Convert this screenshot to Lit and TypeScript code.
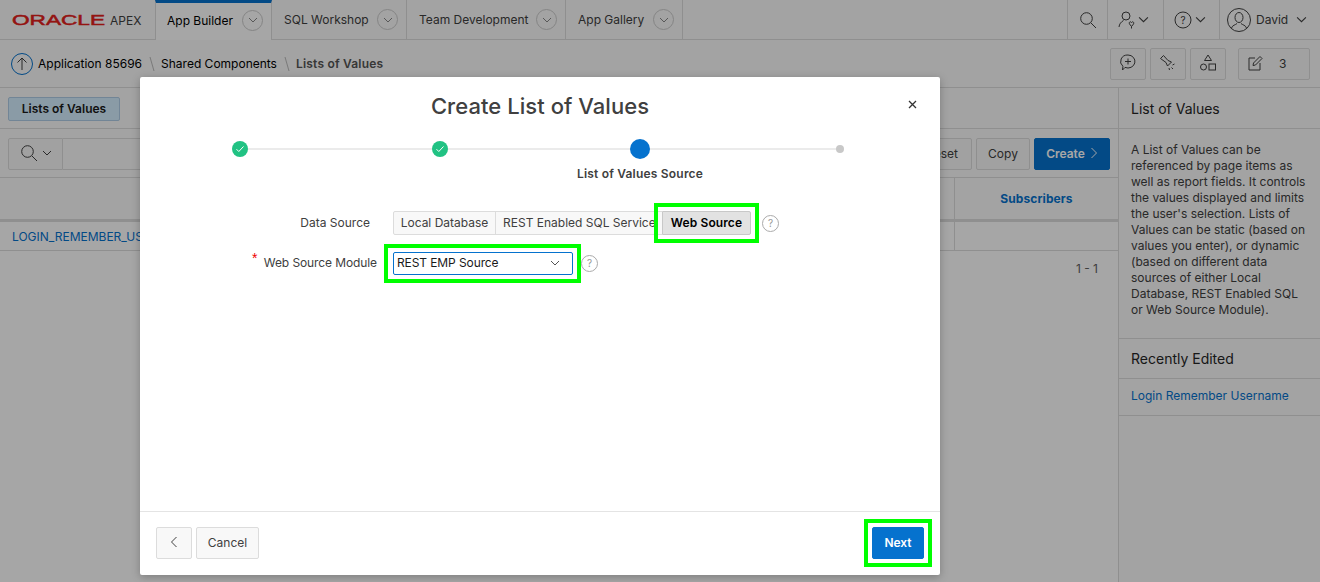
import { LitElement, html, css } from "lit";
import { customElement } from "lit/decorators.js";

const chev = (s = 10) => html`<svg width=${s} height=${s} viewBox="0 0 10 10" fill="none" stroke="currentColor" stroke-width="1"><path d="M1 3l4 4 4-4"/></svg>`;
const help = (cls = "help") => html`<svg class=${cls} width="17" height="17" viewBox="0 0 17 17"><circle cx="8.500" cy="8.500" r="8" fill="none" stroke="#aaa"/><text x="8.500" y="12" text-anchor="middle" font-size="10" fill="#999">?</text></svg>`;
const check = html`<svg width="10" height="10" viewBox="0 0 10 10" fill="none" stroke="#fff" stroke-width="1"><path d="M1.500 5.200l2.300 2.300 4.700-5"/></svg>`;

@customElement("app-root")
export class AppRoot extends LitElement {
  static styles = css`
    :host { display: block; width: 1320px; height: 582px; position: relative; overflow: hidden; background: #fff; font-family: Inter, "Liberation Sans", sans-serif; font-size: 12px; color: #404040; }
    * { box-sizing: border-box; }
    svg { display: block; flex: none; }
    a { color: #0572ce; text-decoration: none; }
    .page { display: flex; flex-direction: column; height: 582px; background: #fff; }

    .top { display: flex; height: 40px; flex: none; background: #fafafa; border-bottom: 1px solid #dcdcdc; }
    .logo { width: 155px; display: flex; align-items: center; padding-left: 12px; }
    .tab { display: flex; align-items: center; justify-content: space-between; padding: 0 8px 0 12px; border-right: 1px solid #dcdcdc; color: #404040; }
    .tab.active { background: #fff; height: 40px; border-top: 3px solid #0572ce; border-left: 1px solid #dcdcdc; color: #000; padding: 0 8px 3px 11px; }
    .tab .c { width: 21px; height: 21px; border: 1px solid #ccc; border-radius: 50%; display: flex; align-items: center; justify-content: center; color: #888; }
    .t1 { width: 117px; } .t2 { width: 135px; } .t3 { width: 159px; } .t4 { width: 117px; }
    .spacer { flex: 1; }
    .tool { display: flex; align-items: center; border-left: 1px solid #dcdcdc; color: #404040; }
    .w1 { width: 40px; justify-content: center; }
    .w2 { width: 56px; padding-left: 9px; gap: 3px; }
    .w3 { width: 56px; padding-left: 10px; gap: 3px; }
    .w4 { width: 101px; padding-left: 7px; gap: 6px; }
    .w4 span { margin-left: -1px; margin-right: 2px; }

    .crumbs { display: flex; align-items: center; height: 48px; flex: none; background: #fafafa; border-bottom: 1px solid #dcdcdc; padding: 0 10px 0 11px; }
    .up { margin-right: 5px; }
    .crumb { color: #000; }
    .crumb.cur { font-weight: 600; color: #555; letter-spacing: .2px; }
    .sep { margin: 0 6px 0 7px; }
    .btn { height: 32px; display: flex; align-items: center; justify-content: center; border: 1px solid #dcdcdc; border-radius: 2px; background: #f8f8f8; color: #404040; padding-bottom: 1px; }
    .ib { width: 36px; margin-left: 4px; }
    .edit { width: 72px; margin-left: 12px; gap: 16px; justify-content: flex-start; padding-left: 8px; }

    .body { flex: 1; display: flex; min-height: 0; }
    .main { flex: 1; min-width: 0; background: #fff; }
    .side { width: 202px; flex: none; border-left: 1px solid #dcdcdc; background: #fafafa; }
    .s-title { height: 41px; display: flex; align-items: center; padding-left: 12px; font-size: 14px; color: #262626; border-bottom: 1px solid #dcdcdc; }
    .s-title.b { height: 41px; border-top: 1px solid #dcdcdc; }
    .s-text { padding: 13px 12px 19px; line-height: 16px; height: 209px; color: #404040; }
    .s-link { display: block; height: 37px; line-height: 34px; padding-left: 12px; border-bottom: 1px solid #dcdcdc; }

    .rtabs { height: 41px; padding: 9px 8px 0; border-bottom: 1px solid #dcdcdc; background: #fafafa; }
    .rtab { display: flex; width: 112px; height: 24px; align-items: center; justify-content: center; background: #d4eeff; border: 1px solid #b0cde6; border-radius: 2px; font-weight: 600; color: #1a1a1a; padding-bottom: 1px; }
    .toolbar { display: flex; align-items: center; height: 49px; padding: 1px 8px 0 8px; background: #fafafa; border-bottom: 1px solid #dcdcdc; gap: 4px; }
    .sbtn { width: 55px; gap: 4px; border-radius: 2px 0 0 2px; }
    .input { width: 300px; height: 32px; margin-left: -4px; border: 1px solid #dcdcdc; border-left: 0; background: #fafafa; }
    .reset { width: 60px; } .copy { width: 54px; }
    .create { width: 76px; background: #0572ce; border-color: #0572ce; color: #fff; font-weight: 600; gap: 5px; }
    .thead { height: 44px; border-bottom: 3px solid #dcdcdc; background: #fafafa; display: flex; justify-content: flex-end; }
    .th { width: 164px; border-left: 1px solid #dcdcdc; display: flex; align-items: center; justify-content: center; font-weight: 700; color: #0572ce; padding-bottom: 1px; letter-spacing: .1px; }
    .row { height: 29px; border-bottom: 1px solid #dcdcdc; display: flex; justify-content: space-between; padding-left: 12px; align-items: center; }
    .row i { display: block; width: 164px; height: 28px; border-left: 1px solid #dcdcdc; }
    .pager { text-align: right; padding: 10px 20px 0 0; color: #606060; }

    .scrim { position: absolute; inset: 0; background: rgba(0, 0, 0, 0.35); }
    .modal { position: absolute; left: 140px; top: 77px; width: 800px; height: 498px; background: #fff; border-radius: 2px; box-shadow: 0 2px 8px rgba(0,0,0,.25); display: flex; flex-direction: column; }
    .m-head { position: relative; height: 58px; flex: none; display: flex; align-items: center; justify-content: center; font-size: 22px; font-weight: 500; color: #404040; letter-spacing: .05px; }
    .close { position: absolute; right: 23px; top: 23px; }
    .steps { display: grid; grid-template-columns: repeat(4, 200px); justify-content: center; height: 60px; flex: none; }
    .step { position: relative; height: 28px; display: flex; justify-content: center; align-items: center; }
    .step.line::after { content: ""; position: absolute; left: 50%; width: 200px; top: 13px; height: 2px; background: #ebebeb; }
    .dot { position: relative; z-index: 1; border-radius: 50%; display: flex; align-items: center; justify-content: center; }
    .done { width: 16px; height: 16px; background: #21c283; }
    .now { width: 20px; height: 20px; background: #0572ce; }
    .todo { width: 8px; height: 8px; background: #c8c8c8; }
    .step-label { position: absolute; top: 31px; left: 0; right: 0; text-align: center; font-weight: 600; color: #404040; white-space: nowrap; letter-spacing: .2px; }

    .form { flex: 1; display: flex; flex-direction: column; gap: 16px; padding-top: 16px; }
    .f-row { display: flex; align-items: center; height: 24px; }
    .lab1 { width: 230px; text-align: right; color: #404040; padding-bottom: 2px; }
    .pills { display: flex; margin-left: 24px; height: 24px; }
    .pill { display: flex; align-items: center; justify-content: center; height: 24px; background: #f8f8f8; border: 1px solid #dcdcdc; margin-left: -1px; color: #404040; white-space: nowrap; overflow: hidden; padding-bottom: 1px; }
    .p1 { width: 103px; border-radius: 2px 0 0 2px; } .p2 { width: 167px; justify-content: flex-start; padding-left: 7px; border-right: 0; }
    .p3 { width: 89px; margin-left: 0; background: #e2e2e2; color: #000; font-weight: 600; border-color: #c8c8c8; border-radius: 0 2px 2px 0; position: relative; overflow: visible; letter-spacing: .1px; }
    .mark { position: absolute; border: 4px solid #0f0; pointer-events: none; }
    .p3 .mark { left: -9px; right: -9px; top: -9px; bottom: -9px; }
    .help { margin-left: 11px; }
    .lab2 { width: 237px; text-align: right; position: relative; padding-bottom: 2px; letter-spacing: -.1px; }
    .star { position: absolute; left: 112px; top: -5px; color: #e00; font-size: 14px; font-family: "Liberation Sans", sans-serif; }
    .select { position: relative; width: 180px; height: 23px; margin-left: 16px; border: 1px solid #0572ce; border-radius: 2px; display: flex; align-items: center; justify-content: space-between; padding: 0 12px 1px 3px; color: #1a1a1a; letter-spacing: -.1px; }
    .select svg { color: #555; }
    .select .mark { left: -10px; right: -9px; top: -9px; bottom: -9px; }
    .h2 { margin-left: 8px; }

    .m-foot { height: 64px; flex: none; border-top: 1px solid #e4e4e4; display: flex; align-items: center; padding: 0 16px 2px; gap: 4px; }
    .back { width: 36px; color: #404040; }
    .cancel { width: 63px; }
    .next { position: relative; width: 52px; background: #0572ce; border-color: #0572ce; color: #fff; font-weight: 600; margin-left: auto; }
    .next .mark { left: -9px; right: -9px; top: -9px; bottom: -9px; }
  `;

  render() {
    return html`
      <div class="page">
        <div class="top">
          <div class="logo">
            <svg width="132" height="20" viewBox="0 0 132 20">
              <text x="0" y="15" font-family="Liberation Sans" font-size="15" fill="#e3201b" stroke="#e3201b" stroke-width=".5" textLength="93" lengthAdjust="spacingAndGlyphs">ORACLE</text>
              <text x="98" y="15" font-family="Inter" font-size="12" fill="#404040">APEX</text>
            </svg>
          </div>
          <div class="tab active t1"><span>App Builder</span><span class="c">${chev()}</span></div>
          <div class="tab t2"><span>SQL Workshop</span><span class="c">${chev()}</span></div>
          <div class="tab t3"><span>Team Development</span><span class="c">${chev()}</span></div>
          <div class="tab t4"><span>App Gallery</span><span class="c">${chev()}</span></div>
          <div class="spacer"></div>
          <div class="tool w1"><svg width="18" height="18" viewBox="0 0 18 18" fill="none" stroke="currentColor"><circle cx="7.500" cy="7.500" r="5.800"/><path d="M12 12l5 5"/></svg></div>
          <div class="tool w2"><svg width="18" height="20" viewBox="0 0 18 20" fill="none" stroke="currentColor"><circle cx="9" cy="6" r="4"/><path d="M2 17c.3-3 2-5 4.500-6.500"/><path d="M12.500 14c-1-2 1.200-3 2-1.500.8-1.500 3-.5 2 1.500l-2 2.500z"/><path d="M14.500 16.500v2"/></svg>${chev(11)}</div>
          <div class="tool w3"><svg width="18" height="18" viewBox="0 0 18 18" fill="none" stroke="currentColor"><circle cx="9" cy="9" r="8"/><text x="9" y="12.500" text-anchor="middle" font-size="10" stroke="none" fill="currentColor">?</text></svg>${chev(11)}</div>
          <div class="tool w4"><svg width="24" height="24" viewBox="0 0 24 24" fill="none" stroke="currentColor"><circle cx="12" cy="12" r="11.500"/><ellipse cx="12" cy="9.500" rx="4" ry="5"/><path d="M4.500 20c1-3 4-3 5.500-4.500M19.500 20c-1-3-4-3-5.500-4.500"/></svg><span>David</span>${chev(11)}</div>
        </div>
        <div class="crumbs">
          <svg class="up" width="22" height="22" viewBox="0 0 22 22" fill="none"><circle cx="11" cy="11" r="10.500" stroke="#0572ce"/><path d="M11 17V5M6.500 9.500L11 5l4.500 4.500" stroke="#404040"/></svg>
          <span class="crumb">Application 85696</span>
          <svg class="sep" width="6" height="16" viewBox="0 0 6 16" fill="none" stroke="#bbb"><path d="M1 1l4 14"/></svg>
          <span class="crumb">Shared Components</span>
          <svg class="sep" width="6" height="16" viewBox="0 0 6 16" fill="none" stroke="#bbb"><path d="M1 1l4 14"/></svg>
          <span class="crumb cur">Lists of Values</span>
          <div class="spacer"></div>
          <div class="btn ib"><svg width="16" height="18" viewBox="0 0 16 18" fill="none" stroke="currentColor"><path d="M8 1a7 6.500 0 1 1-3 12.400L2.500 16l.4-3.700A7 6.500 0 0 1 8 1z"/><path d="M8 4.500v6M5 7.500h6"/></svg></div>
          <div class="btn ib"><svg width="18" height="18" viewBox="0 0 18 18" fill="none" stroke="currentColor"><path d="M1.500 4.500L4.500 1.500 9 6.500l3.500 1.500-4 4L7 8.500z"/><path d="M13.500 11l2-1M12.500 13.500l1.500 1.500M10 14l.5 2"/></svg></div>
          <div class="btn ib"><svg width="16" height="18" viewBox="0 0 16 18" fill="none" stroke="currentColor"><path d="M8 1l3.500 5.500h-7z"/><circle cx="3.500" cy="13" r="3"/><rect x="9" y="10" width="6.500" height="6"/></svg></div>
          <div class="btn edit"><svg width="16" height="16" viewBox="0 0 16 16" fill="none" stroke="currentColor"><path d="M8 3H2v12h11V8"/><path d="M6 10.500l.5-2.500L13 1.500l2 2L8.500 10z"/></svg><span>3</span></div>
        </div>
        <div class="body">
          <div class="main">
            <div class="rtabs"><span class="rtab">Lists of Values</span></div>
            <div class="toolbar">
              <div class="btn sbtn"><svg width="18" height="18" viewBox="0 0 18 18" fill="none" stroke="currentColor"><circle cx="7.500" cy="7.500" r="5.800"/><path d="M12 12l5 5"/></svg>${chev()}</div>
              <div class="input"></div>
              <div class="spacer"></div>
              <div class="btn reset">Reset</div>
              <div class="btn copy">Copy</div>
              <div class="btn create">Create <svg width="8" height="12" viewBox="0 0 8 12" fill="none" stroke="currentColor"><path d="M1.500 1l5 5-5 5"/></svg></div>
            </div>
            <div class="thead"><a class="th">Subscribers</a></div>
            <div class="row"><a>LOGIN_REMEMBER_USERNAME</a><i></i></div>
            <div class="pager">1 - 1</div>
          </div>
          <div class="side">
            <div class="s-title">List of Values</div>
            <div class="s-text">A List of Values can be referenced by page items as well as report fields. It controls the values displayed and limits the user's selection. Lists of Values can be static (based on values you enter), or dynamic (based on different data sources of either Local Database, REST Enabled SQL or Web Source Module).</div>
            <div class="s-title b">Recently Edited</div>
            <a class="s-link">Login Remember Username</a>
          </div>
        </div>
      </div>
      <div class="scrim"></div>
      <div class="modal">
        <div class="m-head">Create List of Values
          <svg class="close" width="9" height="9" viewBox="0 0 9 9" fill="none" stroke="#333" stroke-width="1.300"><path d="M1 1l7 7M8 1L1 8"/></svg>
        </div>
        <div class="steps">
          <div class="step line"><span class="dot done">${check}</span></div>
          <div class="step line"><span class="dot done">${check}</span></div>
          <div class="step line"><span class="dot now"></span><span class="step-label">List of Values Source</span></div>
          <div class="step"><span class="dot todo"></span></div>
        </div>
        <div class="form">
          <div class="f-row">
            <span class="lab1">Data Source</span>
            <div class="pills">
              <span class="pill p1">Local Database</span>
              <span class="pill p2">REST Enabled SQL Service</span>
              <span class="pill p3">Web Source<span class="mark"></span></span>
            </div>
            ${help()}
          </div>
          <div class="f-row">
            <span class="lab2"><span class="star">*</span>Web Source Module</span>
            <div class="select">REST EMP Source ${chev(10)}<span class="mark"></span></div>
            ${help("h2")}
          </div>
        </div>
        <div class="m-foot">
          <div class="btn back"><svg width="8" height="12" viewBox="0 0 8 12" fill="none" stroke="currentColor"><path d="M6.500 1l-5 5 5 5"/></svg></div>
          <div class="btn cancel">Cancel</div>
          <div class="btn next">Next<span class="mark"></span></div>
        </div>
      </div>
    `;
  }
}
